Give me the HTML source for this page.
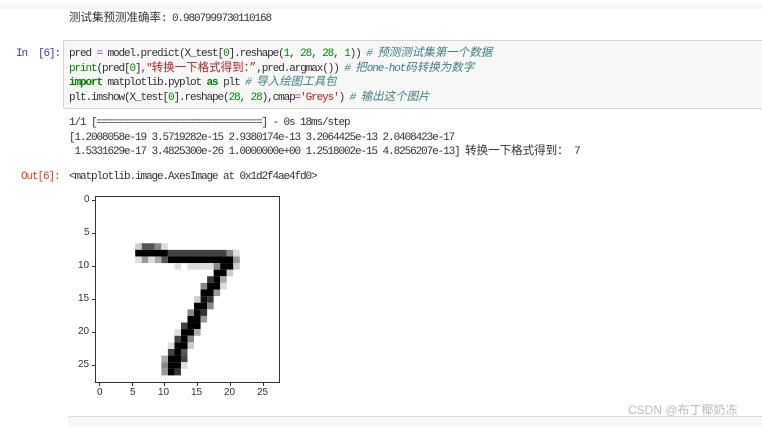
<!DOCTYPE html>
<html><head><meta charset="utf-8"><style>
body{margin:0;width:762px;height:421px;background:#fff;position:relative;overflow:hidden;font-family:"Liberation Mono","Noto Sans CJK SC",monospace;font-size:11px;letter-spacing:-1.1px;color:#333}
.t{position:absolute;white-space:pre;line-height:14.5px}
.z{letter-spacing:0;font-size:11.5px}
.cell{position:absolute;left:63px;top:40px;width:710px;height:67px;background:#f7f7f7;border:1px solid #d4d4d4;border-radius:2px}
.k{color:#008000;font-weight:bold}.o{color:#aa22ff}.s{color:#ba2121}.c{color:#408080;font-style:italic}.n{color:#080}
.pr{color:#303f9f}.po{color:#d84315}
.tk{position:absolute;font-family:"Liberation Sans",sans-serif;font-size:10px;color:#333;letter-spacing:0}
</style></head><body>
<div style="position:absolute;left:0;top:0;width:762px;height:9px;background:linear-gradient(#fff,#f4f4f4)"></div>
<div class="t" style="left:69px;top:12px"><span class="z">测试集预测准确率</span>: 0.9807999730110168</div>
<div class="t pr" style="left:16px;top:47px">In  [6]:</div>
<div class="cell"></div>
<div class="t" style="left:69px;top:47px">pred <span class="o">=</span> model.predict(X_test[<span class="n">0</span>].reshape(<span class="n">1</span>, <span class="n">28</span>, <span class="n">28</span>, <span class="n">1</span>)) <span class="c"># <span class="z">预测测试集第一个数据</span></span>
<span class="n">print</span>(pred[<span class="n">0</span>],<span class="s">"<span class="z">转换一下格式得到：”</span></span>,pred.argmax()) <span class="c"># <span class="z">把</span>one-hot<span class="z">码转换为数字</span></span>
<span class="k">import</span> matplotlib.pyplot <span class="k">as</span> plt <span class="c"># <span class="z">导入绘图工具包</span></span>
plt.imshow(X_test[<span class="n">0</span>].reshape(<span class="n">28</span>, <span class="n">28</span>),cmap<span class="o">=</span><span class="s">'Greys'</span>) <span class="c"># <span class="z">输出这个图片</span></span></div>
<div class="t" style="left:69px;top:116px">1/1 [==============================] - 0s 18ms/step
[1.2008058e-19 3.5719282e-15 2.9380174e-13 3.2064425e-13 2.0408423e-17
 1.5331629e-17 3.4825300e-26 1.0000000e+00 1.2518002e-15 4.8256207e-13] <span class="z">转换一下格式得到：</span> 7</div>
<div class="t po" style="left:21px;top:170px">Out[6]:</div>
<div class="t" style="left:69px;top:170px">&lt;matplotlib.image.AxesImage at 0x1d2f4ae4fd0&gt;</div>

<svg style="position:absolute;left:96px;top:197px" width="183" height="185" viewBox="-0.5 -0.5 28 28" preserveAspectRatio="none">
<rect x="-0.5" y="-0.5" width="28" height="28" fill="#fff"/>
<g>
<rect x="5.5" y="6.5" width="1" height="1" fill="#ccc"/><rect x="6.5" y="6.5" width="2" height="1" fill="#555"/><rect x="8.5" y="6.5" width="1" height="1" fill="#888"/><rect x="9.5" y="6.5" width="1" height="1" fill="#ddd"/>
<rect x="5.5" y="7.5" width="5" height="1" fill="#000"/><rect x="10.5" y="7.5" width="9" height="1" fill="#444"/><rect x="19.5" y="7.5" width="1" height="1" fill="#888"/><rect x="20.5" y="7.5" width="1" height="1" fill="#ddd"/>
<rect x="5.5" y="8.5" width="1" height="1" fill="#ddd"/><rect x="6.5" y="8.5" width="1" height="1" fill="#999"/><rect x="7.5" y="8.5" width="1" height="1" fill="#ddd"/><rect x="8.5" y="8.5" width="1" height="1" fill="#aaa"/><rect x="9.5" y="8.5" width="1" height="1" fill="#555"/><rect x="10.5" y="8.5" width="10" height="1" fill="#000"/><rect x="20.5" y="8.5" width="1" height="1" fill="#999"/>
<rect x="11.5" y="9.5" width="1" height="1" fill="#ddd"/><rect x="13.5" y="9.5" width="4" height="1" fill="#ddd"/><rect x="17.5" y="9.5" width="1" height="1" fill="#888"/><rect x="18.5" y="9.5" width="2" height="1" fill="#000"/><rect x="20.5" y="9.5" width="1" height="1" fill="#ccc"/>
<rect x="17.5" y="10.5" width="2" height="1" fill="#000"/><rect x="19.5" y="10.5" width="1" height="1" fill="#ccc"/>
<rect x="16.5" y="11.5" width="1" height="1" fill="#333"/><rect x="17.5" y="11.5" width="1" height="1" fill="#000"/><rect x="18.5" y="11.5" width="1" height="1" fill="#aaa"/>
<rect x="15.5" y="12.5" width="1" height="1" fill="#888"/><rect x="16.5" y="12.5" width="2" height="1" fill="#000"/><rect x="18.5" y="12.5" width="1" height="1" fill="#ddd"/>
<rect x="15.5" y="13.5" width="2" height="1" fill="#000"/><rect x="17.5" y="13.5" width="1" height="1" fill="#999"/>
<rect x="15.5" y="14.5" width="1" height="1" fill="#111"/><rect x="16.5" y="14.5" width="1" height="1" fill="#333"/><rect x="14.5" y="14.5" width="1" height="1" fill="#ccc"/>
<rect x="14.5" y="15.5" width="2" height="1" fill="#000"/><rect x="16.5" y="15.5" width="1" height="1" fill="#888"/>
<rect x="13.5" y="16.5" width="1" height="1" fill="#888"/><rect x="14.5" y="16.5" width="1" height="1" fill="#000"/><rect x="15.5" y="16.5" width="1" height="1" fill="#333"/>
<rect x="13.5" y="17.5" width="2" height="1" fill="#000"/><rect x="15.5" y="17.5" width="1" height="1" fill="#999"/>
<rect x="12.5" y="18.5" width="1" height="1" fill="#444"/><rect x="13.5" y="18.5" width="2" height="1" fill="#000"/>
<rect x="12.5" y="19.5" width="2" height="1" fill="#000"/><rect x="14.5" y="19.5" width="1" height="1" fill="#aaa"/><rect x="11.5" y="19.5" width="1" height="1" fill="#ddd"/>
<rect x="11.5" y="20.5" width="1" height="1" fill="#444"/><rect x="12.5" y="20.5" width="1" height="1" fill="#000"/><rect x="13.5" y="20.5" width="1" height="1" fill="#888"/>
<rect x="11.5" y="21.5" width="2" height="1" fill="#000"/><rect x="13.5" y="21.5" width="1" height="1" fill="#ccc"/><rect x="10.5" y="21.5" width="1" height="1" fill="#ddd"/>
<rect x="10.5" y="22.5" width="1" height="1" fill="#444"/><rect x="11.5" y="22.5" width="1" height="1" fill="#000"/><rect x="12.5" y="22.5" width="1" height="1" fill="#555"/>
<rect x="10.5" y="23.5" width="2" height="1" fill="#000"/><rect x="12.5" y="23.5" width="1" height="1" fill="#444"/><rect x="9.5" y="23.5" width="1" height="1" fill="#aaa"/>
<rect x="9.5" y="24.5" width="1" height="1" fill="#888"/><rect x="10.5" y="24.5" width="2" height="1" fill="#000"/><rect x="12.5" y="24.5" width="1" height="1" fill="#ddd"/>
<rect x="9.5" y="25.5" width="1" height="1" fill="#999"/><rect x="10.5" y="25.5" width="1" height="1" fill="#000"/><rect x="11.5" y="25.5" width="1" height="1" fill="#333"/>
</g>
</svg>
<div style="position:absolute;left:95px;top:196px;width:183px;height:185px;border:1px solid #333"></div>
<div style="position:absolute;left:92px;top:200px;width:4px;height:1px;background:#333"></div>
<div style="position:absolute;left:92px;top:233px;width:4px;height:1px;background:#333"></div>
<div style="position:absolute;left:92px;top:266px;width:4px;height:1px;background:#333"></div>
<div style="position:absolute;left:92px;top:299px;width:4px;height:1px;background:#333"></div>
<div style="position:absolute;left:92px;top:332px;width:4px;height:1px;background:#333"></div>
<div style="position:absolute;left:92px;top:365px;width:4px;height:1px;background:#333"></div>
<div class="tk" style="left:84px;top:194px">0</div>
<div class="tk" style="left:84px;top:227px">5</div>
<div class="tk" style="left:78px;top:260px">10</div>
<div class="tk" style="left:78px;top:293px">15</div>
<div class="tk" style="left:78px;top:326px">20</div>
<div class="tk" style="left:78px;top:359px">25</div>
<div style="position:absolute;left:99px;top:382px;width:1px;height:4px;background:#333"></div>
<div style="position:absolute;left:132px;top:382px;width:1px;height:4px;background:#333"></div>
<div style="position:absolute;left:164px;top:382px;width:1px;height:4px;background:#333"></div>
<div style="position:absolute;left:197px;top:382px;width:1px;height:4px;background:#333"></div>
<div style="position:absolute;left:230px;top:382px;width:1px;height:4px;background:#333"></div>
<div style="position:absolute;left:263px;top:382px;width:1px;height:4px;background:#333"></div>
<div class="tk" style="left:97px;top:387px">0</div>
<div class="tk" style="left:130px;top:387px">5</div>
<div class="tk" style="left:158px;top:387px">10</div>
<div class="tk" style="left:191px;top:387px">15</div>
<div class="tk" style="left:224px;top:387px">20</div>
<div class="tk" style="left:257px;top:387px">25</div>
<div style="position:absolute;left:68px;top:416px;width:700px;height:10px;background:#f7f7f7;border-top:1px solid #ddd"></div>
<div style="position:absolute;left:628px;top:401px;font-family:'Liberation Sans','Noto Sans CJK SC',sans-serif;font-size:12px;color:#bbb;letter-spacing:0">CSDN @布丁椰奶冻</div>
</body></html>
